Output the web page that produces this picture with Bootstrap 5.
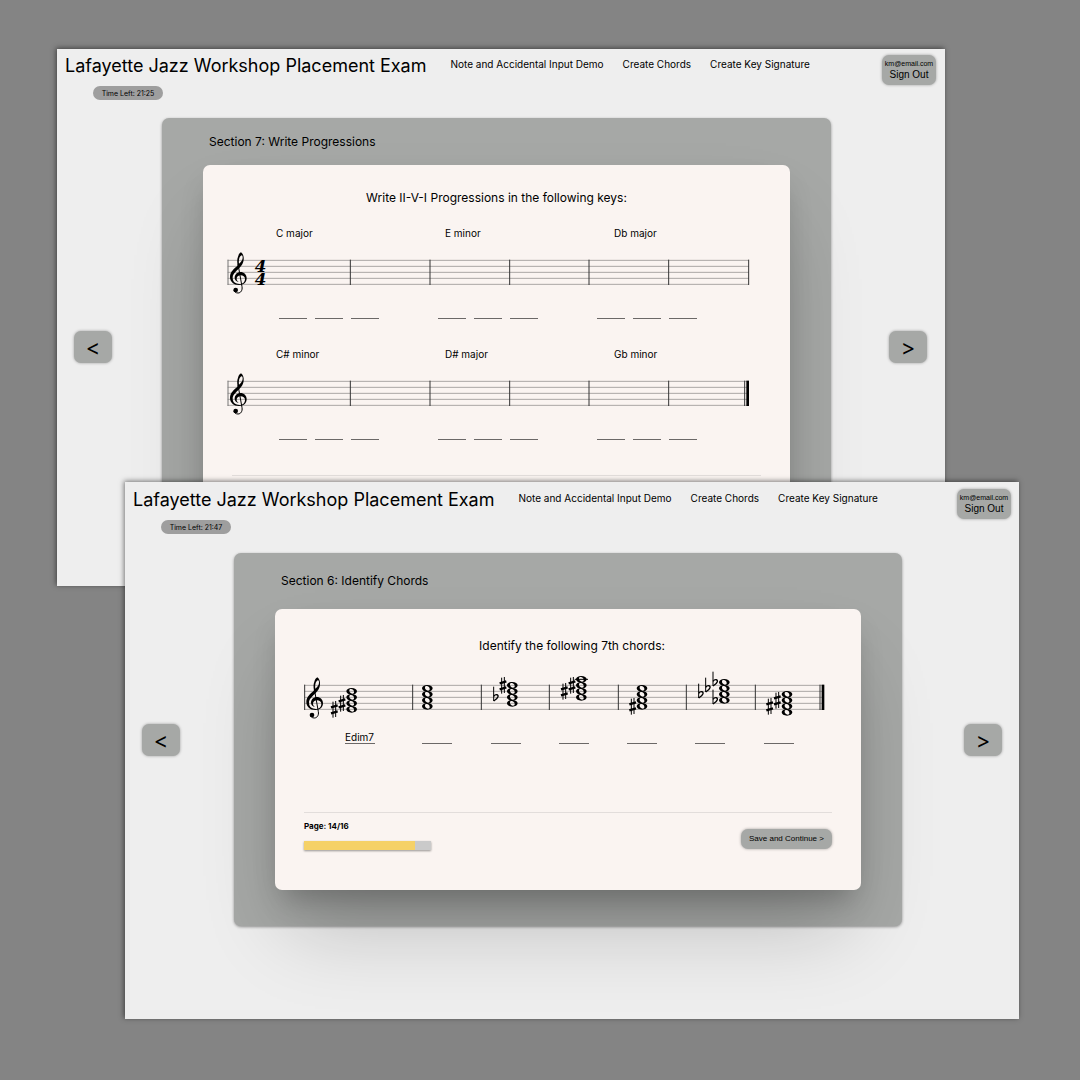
<!DOCTYPE html>
<html lang="en">
<head>
<meta charset="utf-8">
<meta name="viewport" content="width=device-width, initial-scale=1">
<title>Lafayette Jazz Workshop Placement Exam</title>
<link rel="stylesheet" href="https://cdn.jsdelivr.net/npm/bootstrap@5.3.0/dist/css/bootstrap.min.css">
<style>
  body { background: #848484; color: #000; font-family: Inter, "Open Sans", sans-serif; font-size: 10px; line-height: 14px; }
  .desk { min-height: 1080px; overflow: hidden; }
  .window-frame { position: absolute; box-shadow: -1px -1px 5px rgba(0,0,0,.5); height: 537px; }
  .exam-window { position: absolute; inset: 0; overflow: hidden; background: #eee; }
  .frame-back { top: 49px; left: 57px; right: 135px; }
  .frame-front { top: 482px; left: 125px; right: 61px; }
  .top-bar { padding: 6px 9px 0 8px; }
  .frame-front .top-bar { padding: 7px 8px 0; }
  .exam-title { font-size: 18px; line-height: 22px; font-weight: 400; margin: 0 24px 0 0; }
  .top-bar a { color: #000; text-decoration: none; line-height: 18px; }
  .top-links { gap: 19px; }
  .gray-btn { background: #a6a8a6; border: 0; color: #000; border-radius: 7px; box-shadow: 0 0 3px rgba(0,0,0,.35); font-family: "Liberation Sans", Arial, sans-serif; padding: 0; }
  .sign-out { width: 54px; height: 30px; font-size: 10px; line-height: 12px; }
  .sign-out span { display: block; font-size: 7px; line-height: 10px; }
  .timer { margin: 1px 0 0 36px; width: 70px; height: 14px; border-radius: 7px; background: #9e9e9e; font-size: 7px; line-height: 15px; text-align: center; }
  .stage { padding: 0 18px 0 17px; margin-top: 18px; }
  .frame-front .stage { padding: 0 17px; margin-top: 19px; }
  .arrow-btn { width: 38px; height: 32px; flex: none; font-family: Inter, sans-serif; font-size: 22px; line-height: 32px; }
  .panel { flex: 1; margin: 0 58px 0 50px; background: #a6a8a6; border-radius: 7px; padding: 14px 41px 37px; box-shadow: 0 1px 3px rgba(0,0,0,.4); }
  .frame-front .panel { margin: 0 62px 0 54px; padding: 18px 41px 36px; }
  .section-name { font-size: 12px; line-height: 20px; font-weight: 400; margin: 0 0 13px 6px; }
  .frame-front .section-name { margin-bottom: 18px; }
  .sheet { background: #faf4f1; border-radius: 7px; padding: 23px 24px 62px; box-shadow: 0 50px 80px -12px rgba(0,0,0,.2), 0 16px 28px -8px rgba(0,0,0,.24); }
  .frame-front .sheet { padding: 27px 29px 40px; }
  .task { font-size: 12px; line-height: 20px; font-weight: 400; margin: 0; text-align: center; }
  .staff { display: block; width: 100%; height: auto; overflow: visible; }
  .key-names { display: grid; grid-template-columns: 169fr 169fr 152fr; padding-left: 49px; margin: 18px 0 7px; }
  .triples + .key-names { margin-top: 28px; }
  .triples { display: grid; grid-template-columns: 159fr 159fr 169fr; padding-left: 52px; margin-top: 10px; }
  .triples > div { display: flex; gap: 8px; }
  .answer { width: 28px; height: 14px; padding: 0; border: 0; border-bottom: 1px solid #6b6867; border-radius: 0; background: transparent; color: #000; font-size: 10px; line-height: 13px; }
  .answers { display: grid; grid-template-columns: 77fr repeat(6, 68fr); padding-left: 41px; margin-top: 10px; }
  .answers .answer { width: 30px; }
  .rule { border: 0; border-top: 1px solid #e2dddb; opacity: 1; margin: 35px 5px 0; }
  .frame-front .rule { margin: 68px 0 0; }
  .page-foot { padding-top: 7px; }
  .page-no { font-size: 8px; line-height: 12px; font-weight: 700; margin-bottom: 9px; }
  .page-bar { width: 127px; height: 9px; border-radius: 0; background: #cacaca; box-shadow: 0 1px 2px rgba(0,0,0,.4); }
  .page-bar .progress-bar { background: #f5d167; }
  .save-btn { width: 91px; height: 20px; font-size: 8px; line-height: 20px; margin-top: 9px; }
</style>
<script src="https://cdn.jsdelivr.net/npm/bootstrap@5.3.0/dist/js/bootstrap.bundle.min.js"></script>
</head>
<body>
<svg width="0" height="0" class="position-absolute" aria-hidden="true">
  <defs>
    <g id="clef">
      <path fill-rule="evenodd" d="M33 0C39 4 42 13 41 22C40 35 31 44 21 54C12 63 7 70 8 78C9 89 17 95 28 95C38 95 45 89 45 80C45 73 39 69 32 69C25 69 20 73 20 79C20 84 23 87 27 89C18 88 14 82 14 76C14 66 22 59 31 59C42 59 50 67 50 78C50 91 40 98 27 98C11 98 0 88 0 74C0 62 8 53 17 45C20 42 23 40 23 38C21 30 21 20 24 13C26 6 29 2 33 0ZM35 9C29 11 25 21 27 34C34 28 38 22 38 16C38 11 37 9 35 9Z"/>
      <path d="M24 35L36 103C38 114 32 122 24 122C17 122 12 118 12 113" fill="none" stroke="#000" stroke-width="3"/>
      <circle cx="17" cy="113" r="7"/>
    </g>
    <g id="whole">
      <path fill-rule="evenodd" d="M-16 0C-16-6-9-10 0-10S16-6 16 0S9 10 0 10S-16 6-16 0ZM-7-3C-8 2-3 7 2 7C6 7 7 5 7 3C8-2 3-7-2-7C-6-7-7-5-7-3Z"/>
    </g>
    <g id="chord"><use href="#whole"/><use href="#whole" y="18"/><use href="#whole" y="36"/><use href="#whole" y="54"/></g>
    <g id="sharp" stroke="#000"><path d="M-4-23V25M4-25V23" stroke-width="3"/><path d="M-10-6L10-12M-10 12L10 6" stroke-width="7"/></g>
    <g id="flat" fill="none" stroke="#000"><path d="M-6-32V11" stroke-width="3"/><path d="M-6-3C0-11 9-8 7-2C5 4 0 7-6 11" stroke-width="4"/></g>
  </defs>
</svg>

<main class="desk position-relative">
  <section class="window-frame frame-back">
    <div class="exam-window">
      <header class="top-bar d-flex align-items-start">
        <h1 class="exam-title">Lafayette Jazz Workshop Placement Exam</h1>
        <nav class="top-links d-flex me-auto" aria-label="Demos">
          <a href="#">Note and Accidental Input Demo</a><a href="#">Create Chords</a><a href="#">Create Key Signature</a>
        </nav>
        <button type="button" class="gray-btn sign-out"><span>km@email.com</span>Sign Out</button>
      </header>
      <div class="timer">Time Left: 21:25</div>
      <div class="stage d-flex align-items-center">
        <button type="button" class="gray-btn arrow-btn" aria-label="Previous page">&lt;</button>
        <div class="panel">
          <h2 class="section-name">Section 7: Write Progressions</h2>
          <div class="sheet">
            <h3 class="task">Write II-V-I Progressions in the following keys:</h3>
            <div class="key-names"><span>C major</span><span>E minor</span><span>Db major</span></div>
            <svg class="staff" viewBox="0 0 1617 144" role="img" aria-label="Empty staff in four four time">
              <path d="M2 40H1566M2 58H1566M2 76H1566M2 94H1566M2 112H1566" stroke="#aaa6a4" stroke-width="3"/>
              <path d="M3 38V114" stroke="#777" stroke-width="3"/>
              <path d="M370 38V114M609 38V114M848 38V114M1086 38V114M1325 38V114M1565 38V114" stroke="#333" stroke-width="3"/>
              <use href="#clef" x="9" y="16"/>
              <g font-family="DejaVu Serif, serif" font-weight="700" font-style="italic" font-size="50" text-anchor="middle"><text x="101" y="76">4</text><text x="101" y="113">4</text></g>
            </svg>
            <div class="triples">
              <div><input class="answer" aria-label="C major II"><input class="answer" aria-label="C major V"><input class="answer" aria-label="C major I"></div>
              <div><input class="answer" aria-label="E minor II"><input class="answer" aria-label="E minor V"><input class="answer" aria-label="E minor I"></div>
              <div><input class="answer" aria-label="Db major II"><input class="answer" aria-label="Db major V"><input class="answer" aria-label="Db major I"></div>
            </div>
            <div class="key-names"><span>C# minor</span><span>D# major</span><span>Gb minor</span></div>
            <svg class="staff" viewBox="0 0 1617 144" role="img" aria-label="Empty staff">
              <path d="M2 40H1566M2 58H1566M2 76H1566M2 94H1566M2 112H1566" stroke="#aaa6a4" stroke-width="3"/>
              <path d="M3 38V114" stroke="#777" stroke-width="3"/>
              <path d="M370 38V114M609 38V114M848 38V114M1086 38V114M1325 38V114M1553 38V114" stroke="#333" stroke-width="3"/>
              <path d="M1562 38V114" stroke="#000" stroke-width="8"/>
              <use href="#clef" x="9" y="16"/>
            </svg>
            <div class="triples">
              <div><input class="answer" aria-label="C# minor II"><input class="answer" aria-label="C# minor V"><input class="answer" aria-label="C# minor I"></div>
              <div><input class="answer" aria-label="D# major II"><input class="answer" aria-label="D# major V"><input class="answer" aria-label="D# major I"></div>
              <div><input class="answer" aria-label="Gb minor II"><input class="answer" aria-label="Gb minor V"><input class="answer" aria-label="Gb minor I"></div>
            </div>
            <hr class="rule">
          </div>
        </div>
        <button type="button" class="gray-btn arrow-btn" aria-label="Next page">&gt;</button>
      </div>
    </div>
  </section>

  <section class="window-frame frame-front">
    <div class="exam-window">
      <header class="top-bar d-flex align-items-start">
        <h1 class="exam-title">Lafayette Jazz Workshop Placement Exam</h1>
        <nav class="top-links d-flex me-auto" aria-label="Demos">
          <a href="#">Note and Accidental Input Demo</a><a href="#">Create Chords</a><a href="#">Create Key Signature</a>
        </nav>
        <button type="button" class="gray-btn sign-out"><span>km@email.com</span>Sign Out</button>
      </header>
      <div class="timer">Time Left: 21:47</div>
      <div class="stage d-flex align-items-center">
        <button type="button" class="gray-btn arrow-btn" aria-label="Previous page">&lt;</button>
        <div class="panel">
          <h2 class="section-name">Section 6: Identify Chords</h2>
          <div class="sheet">
            <h3 class="task ps-2">Identify the following 7th chords:</h3>
            <svg class="staff mt-3" viewBox="0 0 1584 144" role="img" aria-label="Seven seventh chords">
              <path d="M1 40H1560M1 58H1560M1 76H1560M1 94H1560M1 112H1560" stroke="#aaa6a4" stroke-width="3"/>
              <path d="M2 38V114M326 38V114M532 38V114M736 38V114M943 38V114M1147 38V114M1354 38V114M1548 38V114" stroke="#333" stroke-width="3"/>
              <path d="M1557 38V114" stroke="#000" stroke-width="8"/>
              <use href="#clef" x="7" y="16"/>
              <use href="#sharp" x="91" y="112"/><use href="#sharp" x="114" y="94"/><use href="#chord" x="143" y="58"/>
              <use href="#chord" x="370" y="49"/>
              <use href="#flat" x="575" y="76"/><use href="#sharp" x="597" y="40"/><use href="#chord" x="625" y="40"/>
              <use href="#sharp" x="781" y="58"/><use href="#sharp" x="804" y="40"/><use href="#chord" x="832" y="22"/><path d="M812 22H852" stroke="#000" stroke-width="3"/>
              <use href="#sharp" x="986" y="103"/><use href="#chord" x="1014" y="49"/>
              <use href="#flat" x="1190" y="67"/><use href="#flat" x="1211" y="49"/><use href="#flat" x="1233" y="31"/><use href="#flat" x="1233" y="85"/><use href="#chord" x="1261" y="31"/>
              <use href="#sharp" x="1397" y="103"/><use href="#sharp" x="1420" y="85"/><use href="#chord" x="1449" y="67"/>
            </svg>
            <div class="answers">
              <input class="answer" aria-label="Chord 1" value="Edim7"><input class="answer" aria-label="Chord 2"><input class="answer" aria-label="Chord 3"><input class="answer" aria-label="Chord 4"><input class="answer" aria-label="Chord 5"><input class="answer" aria-label="Chord 6"><input class="answer" aria-label="Chord 7">
            </div>
            <hr class="rule">
            <div class="page-foot d-flex justify-content-between align-items-start">
              <div>
                <div class="page-no">Page: 14/16</div>
                <div class="progress page-bar" role="progressbar" aria-label="Exam progress" aria-valuenow="14" aria-valuemin="0" aria-valuemax="16"><div class="progress-bar" style="width:87.5%"></div></div>
              </div>
              <button type="button" class="gray-btn save-btn">Save and Continue &gt;</button>
            </div>
          </div>
        </div>
        <button type="button" class="gray-btn arrow-btn" aria-label="Next page">&gt;</button>
      </div>
    </div>
  </section>
</main>
</body>
</html>
